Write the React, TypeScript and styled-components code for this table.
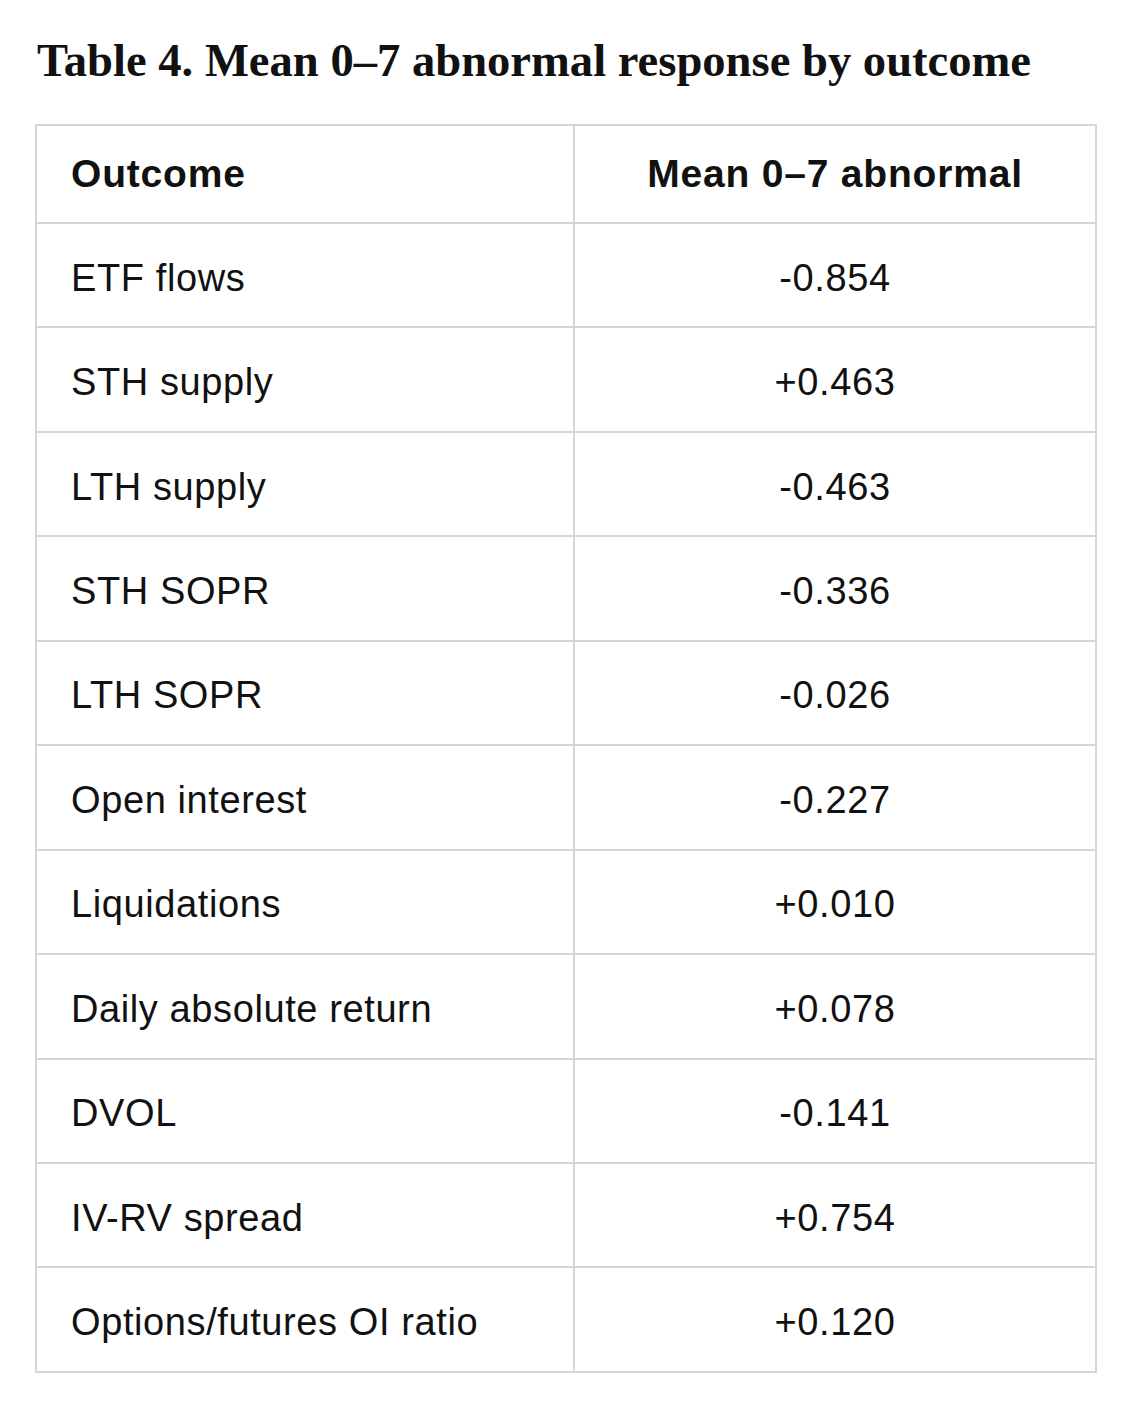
import React from "react";
import styled, { createGlobalStyle } from "styled-components";

const Global = createGlobalStyle`
  html, body { margin: 0; padding: 0; background: #ffffff; }
  body { font-family: "Liberation Sans", Arial, sans-serif; color: #111; }
`;

const Page = styled.div`
  padding: 33px 27px 30px 35px;
`;

const Title = styled.h1`
  margin: 0 0 37px 2px;
  font-family: "Liberation Serif", "Times New Roman", serif;
  font-weight: 700;
  font-size: 46.6px;
  line-height: 54px;
  color: #111;
  white-space: nowrap;
`;

const Table = styled.table`
  width: 1060px;
  border-collapse: collapse;
  table-layout: fixed;
`;

const Cell = styled.td<{ $align?: "left" | "center"; $head?: boolean }>`
  border: 2px solid #d6d6d6;
  height: ${(p) => (p.$head ? "96px" : "96.45px")};
  padding: ${(p) => (p.$head ? "0" : "6px 0 0")};
  padding-left: ${(p) => (p.$align === "center" ? 0 : 34)}px;
  text-align: ${(p) => p.$align ?? "left"};
  vertical-align: middle;
  font-size: ${(p) => (p.$head ? 39 : 38)}px;
  letter-spacing: ${(p) => (p.$head ? 0.8 : 0.6)}px;
  font-weight: ${(p) => (p.$head ? 700 : 400)};
  color: #111;
`;

const rows: [string, string][] = [
  ["ETF flows", "-0.854"],
  ["STH supply", "+0.463"],
  ["LTH supply", "-0.463"],
  ["STH SOPR", "-0.336"],
  ["LTH SOPR", "-0.026"],
  ["Open interest", "-0.227"],
  ["Liquidations", "+0.010"],
  ["Daily absolute return", "+0.078"],
  ["DVOL", "-0.141"],
  ["IV-RV spread", "+0.754"],
  ["Options/futures OI ratio", "+0.120"],
];

export default function App() {
  return (
    <>
      <Global />
      <Page>
        <Title>Table 4. Mean 0–7 abnormal response by outcome</Title>
        <Table>
          <colgroup>
            <col style={{ width: 538 }} />
            <col style={{ width: 522 }} />
          </colgroup>
          <thead>
            <tr>
              <Cell as="th" $head>Outcome</Cell>
              <Cell as="th" $head $align="center">Mean 0–7 abnormal</Cell>
            </tr>
          </thead>
          <tbody>
            {rows.map(([k, v]) => (
              <tr key={k}>
                <Cell>{k}</Cell>
                <Cell $align="center">{v}</Cell>
              </tr>
            ))}
          </tbody>
        </Table>
      </Page>
    </>
  );
}
